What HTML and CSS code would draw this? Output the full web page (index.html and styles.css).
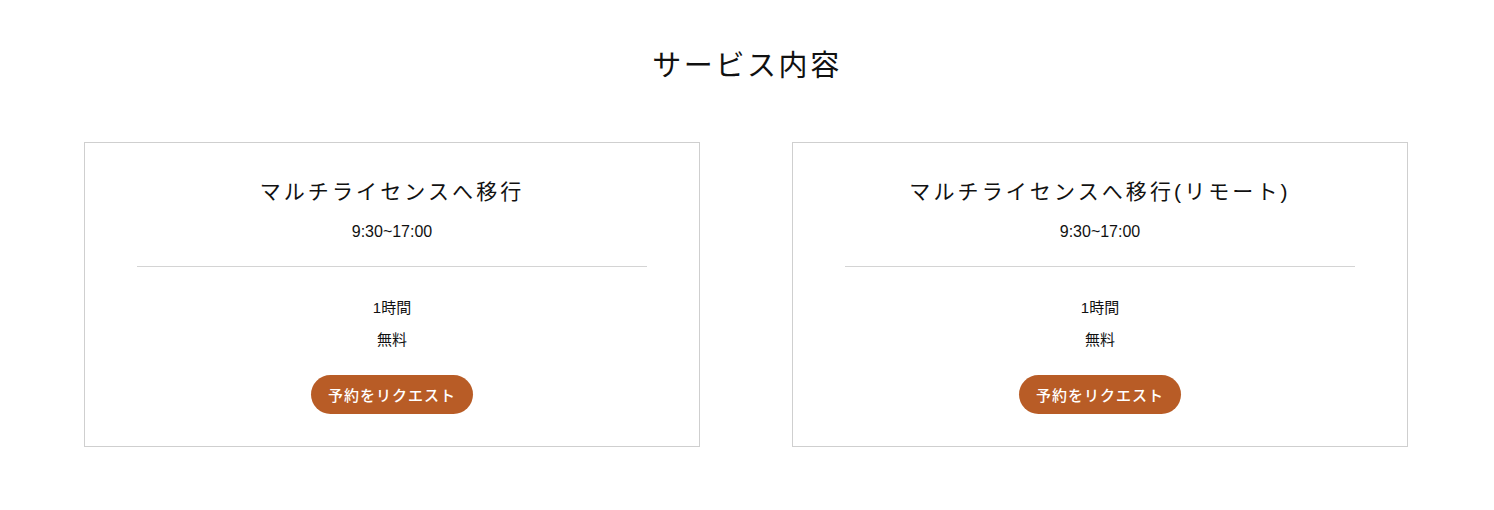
FILE: index.html
```html
<!DOCTYPE html>
<html lang="ja">
<head>
<meta charset="utf-8">
<link rel="stylesheet" href="styles.css">
</head>
<body>
<section class="services">
  <h1 class="services-title">サービス内容</h1>
  <div class="cards">
    <div class="card">
      <h2 class="card-title">マルチライセンスへ移行</h2>
      <p class="card-time">9:30~17:00</p>
      <hr class="card-divider">
      <p class="card-info">1時間</p>
      <p class="card-info">無料</p>
      <button class="card-btn">予約をリクエスト</button>
    </div>
    <div class="card">
      <h2 class="card-title">マルチライセンスへ移行(リモート)</h2>
      <p class="card-time">9:30~17:00</p>
      <hr class="card-divider">
      <p class="card-info">1時間</p>
      <p class="card-info">無料</p>
      <button class="card-btn">予約をリクエスト</button>
    </div>
  </div>
</section>
</body>
</html>
```
FILE: styles.css
```css
html, body {
  margin: 0;
  padding: 0;
  background: #fff;
}
body {
  font-family: "Liberation Sans", "Noto Sans CJK JP", sans-serif;
  color: #111;
}
.services {
  padding-top: 46px;
}
.services-title {
  margin: 0;
  text-align: center;
  font-weight: 400;
  font-size: 29px;
  line-height: 40px;
  letter-spacing: 2.6px;
}
.cards {
  display: flex;
  justify-content: center;
  gap: 92px;
  margin-top: 56px;
  padding-right: 2px;
}
.card {
  width: 614px;
  height: 303px;
  border: 1px solid #cfcfcf;
  display: flex;
  flex-direction: column;
  align-items: center;
  box-sizing: content-box;
}
.card-title {
  margin: 33px 0 0;
  font-weight: 400;
  font-size: 21px;
  line-height: 32px;
  letter-spacing: 3.1px;
}
.card-time {
  margin: 13px 0 0;
  font-size: 16px;
  line-height: 22px;
}
.card-divider {
  width: 510px;
  border: 0;
  border-top: 1px solid #d4d4d4;
  margin: 23px 0 0;
}
.card-info {
  margin: 31px 0 0;
  font-size: 15px;
  line-height: 20px;
}
.card-info + .card-info {
  margin-top: 12px;
}
.card-btn {
  margin-top: 25px;
  width: 162px;
  height: 39px;
  border: 0;
  border-radius: 20px;
  background: #b85c26;
  color: #fff;
  font-family: "Liberation Sans", "Noto Sans CJK JP", sans-serif;
  font-size: 15px;
  font-weight: 500;
  letter-spacing: 1px;
  padding: 0;
}
```
